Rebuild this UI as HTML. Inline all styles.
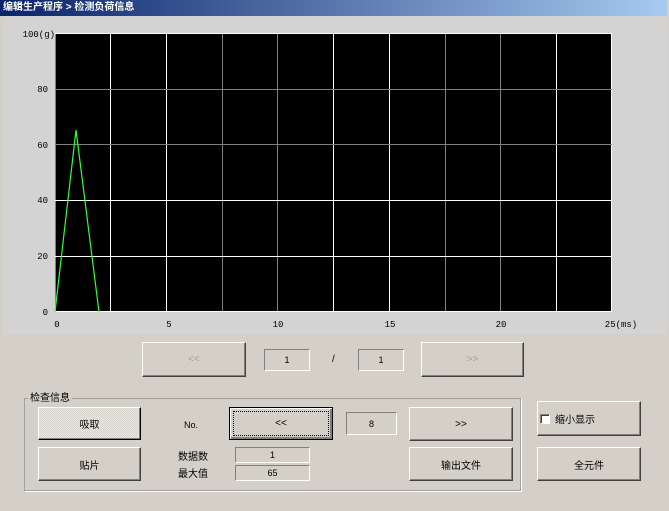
<!DOCTYPE html><html><head><meta charset="utf-8"><style>
*{box-sizing:border-box;margin:0;padding:0}
body{width:669px;height:511px;background:#d4d0c8;position:relative;overflow:hidden;font-family:"Liberation Sans","Noto Sans CJK SC",sans-serif;font-size:10px;color:#000}
.a{position:absolute}
.title{left:0;top:0;width:667px;height:16px;background:linear-gradient(90deg,#0a246a,#a6caf0);color:#fff;font-weight:bold;font-size:10px;line-height:16px;padding-left:3px}
.btn{position:absolute;border:1px solid;border-color:#fff #404040 #404040 #fff;box-shadow:inset -1px -1px 0 #808080;background:#d4d0c8;display:flex;align-items:center;justify-content:center;font-size:10px}
.box{position:absolute;border:1px solid;border-color:#808080 #fff #fff #808080;display:flex;align-items:center;justify-content:center;font-size:9px}
.lbl{position:absolute;font-size:10px}
</style></head><body>
<div class="a title">编辑生产程序 &gt; 检测负荷信息</div>
<div class="a" style="left:3px;top:17px;width:664px;height:317px;background:#d3d3d3"></div>
<svg class="a" style="left:0;top:0" width="669" height="340">
<rect x="55" y="33" width="557" height="279" fill="#000"/>
<g stroke-width="1">
<line x1="55.5" y1="33" x2="55.5" y2="312" stroke="#808080"/>
<line x1="110.5" y1="33" x2="110.5" y2="312" stroke="#fff"/>
<line x1="166.5" y1="33" x2="166.5" y2="312" stroke="#fff"/>
<line x1="222.5" y1="33" x2="222.5" y2="312" stroke="#808080"/>
<line x1="277.5" y1="33" x2="277.5" y2="312" stroke="#808080"/>
<line x1="333.5" y1="33" x2="333.5" y2="312" stroke="#fff"/>
<line x1="389.5" y1="33" x2="389.5" y2="312" stroke="#fff"/>
<line x1="445.5" y1="33" x2="445.5" y2="312" stroke="#808080"/>
<line x1="500.5" y1="33" x2="500.5" y2="312" stroke="#808080"/>
<line x1="556.5" y1="33" x2="556.5" y2="312" stroke="#fff"/>
<line x1="611.5" y1="33" x2="611.5" y2="312" stroke="#fff"/>
<line x1="55" y1="33.5" x2="612" y2="33.5" stroke="#fff"/>
<line x1="55" y1="89.5" x2="612" y2="89.5" stroke="#808080"/>
<line x1="55" y1="144.5" x2="612" y2="144.5" stroke="#808080"/>
<line x1="55" y1="200.5" x2="612" y2="200.5" stroke="#fff"/>
<line x1="55" y1="256.5" x2="612" y2="256.5" stroke="#fff"/>
<line x1="55" y1="311.5" x2="612" y2="311.5" stroke="#fff"/>
</g>
<polyline points="55,312 76,130 99,312" fill="none" stroke="#3f3" stroke-width="1.2"/>
<g font-family="Liberation Mono,monospace" font-size="9" fill="#000" text-anchor="end">
<text x="55" y="37">100(g)</text><text x="48" y="92">80</text><text x="48" y="148">60</text><text x="48" y="203">40</text><text x="48" y="259">20</text><text x="48" y="315">0</text>
</g>
<g font-family="Liberation Mono,monospace" font-size="9" fill="#000" text-anchor="middle">
<text x="57" y="327">0</text><text x="169" y="327">5</text><text x="278" y="327">10</text><text x="390" y="327">15</text><text x="501" y="327">20</text><text x="621" y="327">25(ms)</text>
</g>
</svg>
<div class="btn" style="left:142px;top:342px;width:104px;height:35px;color:#a0a0a0">&lt;&lt;</div>
<div class="box" style="left:264px;top:349px;width:46px;height:22px">1</div>
<div class="lbl" style="left:332px;top:354px">/</div>
<div class="box" style="left:358px;top:349px;width:46px;height:22px">1</div>
<div class="btn" style="left:421px;top:342px;width:103px;height:35px;color:#a0a0a0">&gt;&gt;</div>
<div class="a" style="left:24px;top:398px;width:497px;height:93px;border:1px solid #a0a0a0;box-shadow:1px 1px 0 #fff"></div>
<div class="lbl" style="left:28px;top:389px;background:#d4d0c8;padding:0 2px">检查信息</div>
<div class="btn" style="left:38px;top:407px;width:103px;height:33px;background:repeating-conic-gradient(#d4d0c8 0 25%,#ecebe6 0 50%) 0 0/2px 2px;border-color:#fff #000 #000 #fff">吸取</div>
<div class="btn" style="left:38px;top:447px;width:103px;height:34px">贴片</div>
<div class="lbl" style="left:184px;top:420px;font-size:9px">No.</div>
<div class="btn" style="left:229px;top:407px;width:104px;height:33px;border:1px solid #000;box-shadow:inset 1px 1px 0 #fff,inset -2px -2px 0 #808080"><div style="position:absolute;inset:3px;border:1px dotted #000"></div>&lt;&lt;</div>
<div class="box" style="left:346px;top:412px;width:51px;height:23px">8</div>
<div class="btn" style="left:409px;top:407px;width:104px;height:34px">&gt;&gt;</div>
<div class="lbl" style="left:178px;top:448px">数据数</div>
<div class="lbl" style="left:178px;top:465px">最大值</div>
<div class="box" style="left:235px;top:447px;width:75px;height:16px">1</div>
<div class="box" style="left:235px;top:465px;width:75px;height:16px">65</div>
<div class="btn" style="left:409px;top:447px;width:104px;height:34px">输出文件</div>
<div class="btn" style="left:537px;top:401px;width:104px;height:35px;justify-content:flex-start;padding-left:2px"><span style="display:inline-block;width:10px;height:10px;background:#fff;border:1px solid;border-color:#808080 #fff #fff #808080;box-shadow:inset 1px 1px 0 #404040;margin-right:5px"></span>缩小显示</div>
<div class="btn" style="left:537px;top:447px;width:104px;height:34px">全元件</div>
</body></html>
